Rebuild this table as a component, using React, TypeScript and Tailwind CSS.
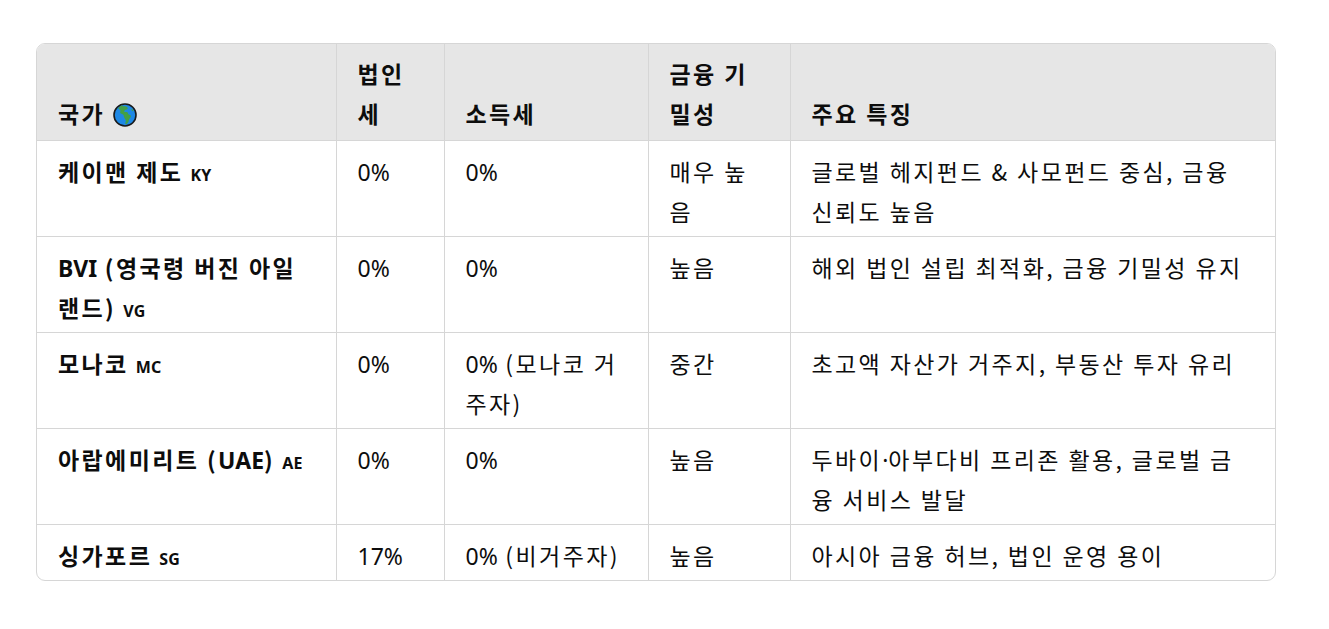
import React from 'react';

interface Row {
  country: string;
  code: string;
  corp: string;
  income: string;
  secrecy: string;
  features: string;
}

const rows: Row[] = [
  { country: '케이맨 제도', code: 'KY', corp: '0%', income: '0%', secrecy: '매우 높음', features: '글로벌 헤지펀드 & 사모펀드 중심, 금융 신뢰도 높음' },
  { country: 'BVI (영국령 버진 아일랜드)', code: 'VG', corp: '0%', income: '0%', secrecy: '높음', features: '해외 법인 설립 최적화, 금융 기밀성 유지' },
  { country: '모나코', code: 'MC', corp: '0%', income: '0% (모나코 거주자)', secrecy: '중간', features: '초고액 자산가 거주지, 부동산 투자 유리' },
  { country: '아랍에미리트 (UAE)', code: 'AE', corp: '0%', income: '0%', secrecy: '높음', features: '두바이·아부다비 프리존 활용, 글로벌 금융 서비스 발달' },
  { country: '싱가포르', code: 'SG', corp: '17%', income: '0% (비거주자)', secrecy: '높음', features: '아시아 금융 허브, 법인 운영 용이' },
];

// hangul gets extra tracking, latin runs and the middle dot don't
const Txt = ({ text }: { text: string }) => (
  <>
    {text.split(/([A-Za-z0-9%·]+)/).map((part, i) =>
      /^[A-Za-z0-9%·]+$/.test(part) ? (
        <span key={i} className="tracking-normal font-['Noto_Sans'] leading-none">
          {part}
        </span>
      ) : (
        <React.Fragment key={i}>{part}</React.Fragment>
      )
    )}
  </>
);

// 🌍 drawn by hand, no emoji font in the sandbox
const Globe = () => (
  <svg width="24" height="24" viewBox="0 0 24 24" className="inline-block align-[-4px] ml-[8px]">
    <circle cx="12" cy="12" r="11" fill="#1e88e5" stroke="#1a1a1a" strokeWidth="1.6" />
    <path
      d="M9.5 2.2c-2 .6-3.6 2-4.3 3.4.6.8 1.8.9 2.2 1.9.3.9-.6 1.6-.2 2.5.5 1 2 .8 2.9 1.6 1 .9.6 2.4 1.3 3.4.7 1 1.5 1.9 1.4 3.2-.1 1.2-.8 2.1-.4 3.1 1.4-.3 2.4-1.3 3-2.6.6-1.2.3-2.4 1.2-3.3.8-.8 1.6-1.5 1.2-2.6-.3-.9-1.4-.9-2.1-1.4-.8-.6-.6-1.7-1.4-2.2-.9-.6-2 .3-2.8-.3-.6-.5-.1-1.5.5-1.9.8-.6 2.1-.3 2.6-1.2.4-.7-.1-1.6-.8-2.1-1.4-.5-2.8-.6-4.3-.5z"
      fill="#43a047"
    />
    <path d="M18.5 5.5c.9.6 1.7 1.6 2.1 2.6-.8.2-1.6-.2-2-.9-.3-.6-.3-1.2-.1-1.7z" fill="#43a047" />
  </svg>
);

const Code = ({ children }: { children: React.ReactNode }) => (
  <span className="ml-[7px] font-['Noto_Sans'] text-[16px] leading-none font-bold tracking-[0.3px]">{children}</span>
);

const thCls = 'px-[21px] pt-[9px] pb-[7px] align-bottom text-left font-bold';
const tdCls = 'px-[21px] pt-[10px] pb-[5px] align-top';

export default function App() {
  return (
    <div
      className="min-h-screen bg-white pl-[36px] pt-[43px] text-[#0d0d0d]"
      style={{ fontFamily: '"Noto Sans CJK KR", "Noto Sans", sans-serif' }}
    >
      <div className="w-[1240px] overflow-hidden rounded-[9px] border border-[#d6d6d6]">
        <table className="w-full table-fixed border-collapse text-[23px] leading-[40px] tracking-[2.4px]">
          <colgroup>
            <col className="w-[299px]" />
            <col className="w-[108px]" />
            <col className="w-[204px]" />
            <col className="w-[142px]" />
            <col className="w-[485px]" />
          </colgroup>
          <thead>
            <tr className="h-[95px] bg-[#e6e6e6]">
              <th className={thCls}>
                국가
                <Globe />
              </th>
              <th className={`${thCls} border-l border-[#d6d6d6]`}>법인세</th>
              <th className={`${thCls} border-l border-[#d6d6d6]`}>소득세</th>
              <th className={`${thCls} border-l border-[#d6d6d6]`}>금융 기밀성</th>
              <th className={`${thCls} border-l border-[#d6d6d6]`}>주요 특징</th>
            </tr>
          </thead>
          <tbody>
            {rows.map((r) => (
              <tr key={r.code} className="border-t border-[#d6d6d6]">
                <td className={`${tdCls} font-bold`}>
                  <Txt text={r.country} />
                  <Code>{r.code}</Code>
                </td>
                <td className={`${tdCls} border-l border-[#d6d6d6]`}>
                  <Txt text={r.corp} />
                </td>
                <td className={`${tdCls} border-l border-[#d6d6d6]`}>
                  <Txt text={r.income} />
                </td>
                <td className={`${tdCls} border-l border-[#d6d6d6]`}>{r.secrecy}</td>
                <td className={`${tdCls} border-l border-[#d6d6d6]`}>
                  <Txt text={r.features} />
                </td>
              </tr>
            ))}
          </tbody>
        </table>
      </div>
    </div>
  );
}
